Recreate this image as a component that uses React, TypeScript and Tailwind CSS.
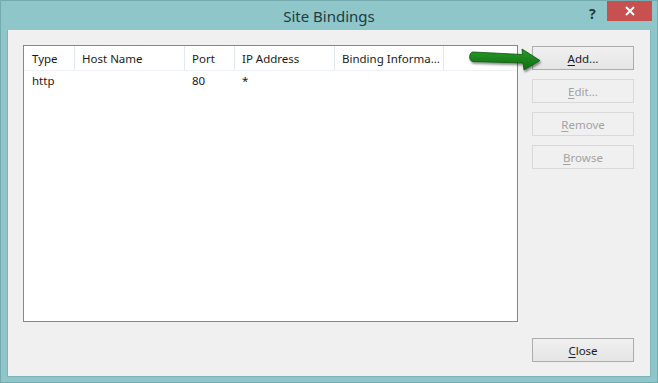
import React from "react";

const font = { fontFamily: '"Segoe UI", "Noto Sans", "Open Sans", sans-serif' };

function Btn({ u, rest, disabled }: { u: string; rest: string; disabled?: boolean }) {
  return (
    <div
      className={
        "h-[24px] w-[102px] flex items-center justify-center text-[11.5px] border " +
        (disabled
          ? "border-[#d9d9d9] bg-[#f0f0f0] text-[#a3a3a3]"
          : "border-[#acacac] bg-gradient-to-b from-[#f0f0f0] to-[#e5e5e5] text-[#1a1a1a]")
      }
    >
      <span className="mt-[1px]">
        <span className="underline underline-offset-2">{u}</span>
        {rest}
      </span>
    </div>
  );
}

export default function App() {
  const cols = [
    { w: 51, t: "Type" },
    { w: 110, t: "Host Name" },
    { w: 50, t: "Port" },
    { w: 100, t: "IP Address" },
    { w: 109, t: "Binding Informa..." },
  ];
  const row = ["http", "", "80", "*", ""];
  return (
    <div className="relative w-[658px] h-[383px] bg-[#8ec6ca] border border-[#73abaf] flex flex-col overflow-hidden" style={font}>
      <div className="h-[29px] relative flex items-center justify-center">
        <span className="text-[15px] text-[#1e3c40] mt-[2px]">Site Bindings</span>
        <span className="absolute left-[588px] top-[2px] text-[14px] font-bold text-[#1e3c40]">?</span>
        <div className="absolute left-[606px] top-0 w-[45px] h-[20px] bg-[#c75050] flex items-center justify-center">
          <svg width="10" height="10" viewBox="0 0 10 10">
            <path d="M1 1 L9 9 M9 1 L1 9" stroke="white" strokeWidth="2" />
          </svg>
        </div>
      </div>
      <div className="ml-[6px] mr-[6px] mb-[5px] flex-1 bg-[#f0f0f0] flex pl-[15px] pt-[15px] pr-[16px] pb-[14px] gap-[14px] border border-[#7db4b8] border-t-0">
        <div className="w-[496px] h-[277px] bg-white border border-[#828790] text-[11.5px] text-[#1a1a1a]">
          <div className="flex h-[25px] border-b border-[#eef1f5]">
            {cols.map((c, i) => (
              <div
                key={i}
                style={{ width: c.w }}
                className={(i === 0 ? "pl-[8px] " : "pl-[7px] ") + "flex items-center pt-[2px] border-r border-[#e3e8ee] whitespace-nowrap overflow-hidden"}
              >
                {c.t}
              </div>
            ))}
          </div>
          <div className="flex h-[20px]">
            {cols.map((c, i) => (
              <div
                key={i}
                style={{ width: c.w }}
                className={(i === 0 ? "pl-[8px] " : "pl-[7px] ") + "flex items-center whitespace-nowrap"}
              >
                {row[i]}
              </div>
            ))}
          </div>
        </div>
        <div className="flex flex-col justify-between">
          <div className="flex flex-col gap-[9px] pt-[1px]">
            <Btn u="A" rest="dd..." />
            <Btn u="E" rest="dit..." disabled />
            <Btn u="R" rest="emove" disabled />
            <Btn u="B" rest="rowse" disabled />
          </div>
          <Btn u="C" rest="lose" />
        </div>
      </div>
      <svg className="absolute left-[464px] top-[44px]" width="82" height="34" viewBox="464 44 82 34">
        <defs>
          <filter id="sh" x="-20%" y="-40%" width="140%" height="180%">
            <feDropShadow dx="1" dy="2" stdDeviation="1.2" floodColor="#000" floodOpacity="0.45" />
          </filter>
          <linearGradient id="g" x1="0" y1="0" x2="0" y2="1">
            <stop offset="0" stopColor="#2a9a2a" />
            <stop offset="1" stopColor="#0e6d12" />
          </linearGradient>
        </defs>
        <path
          d="M472 51 C468 51 467 60 472 60.5 L522 62 L523 69 L539 59.5 L521 48 L521.5 53.5 Z"
          fill="url(#g)"
          stroke="#0b5a0e"
          strokeWidth="0.8"
          strokeLinejoin="round"
          filter="url(#sh)"
        />
      </svg>
    </div>
  );
}
